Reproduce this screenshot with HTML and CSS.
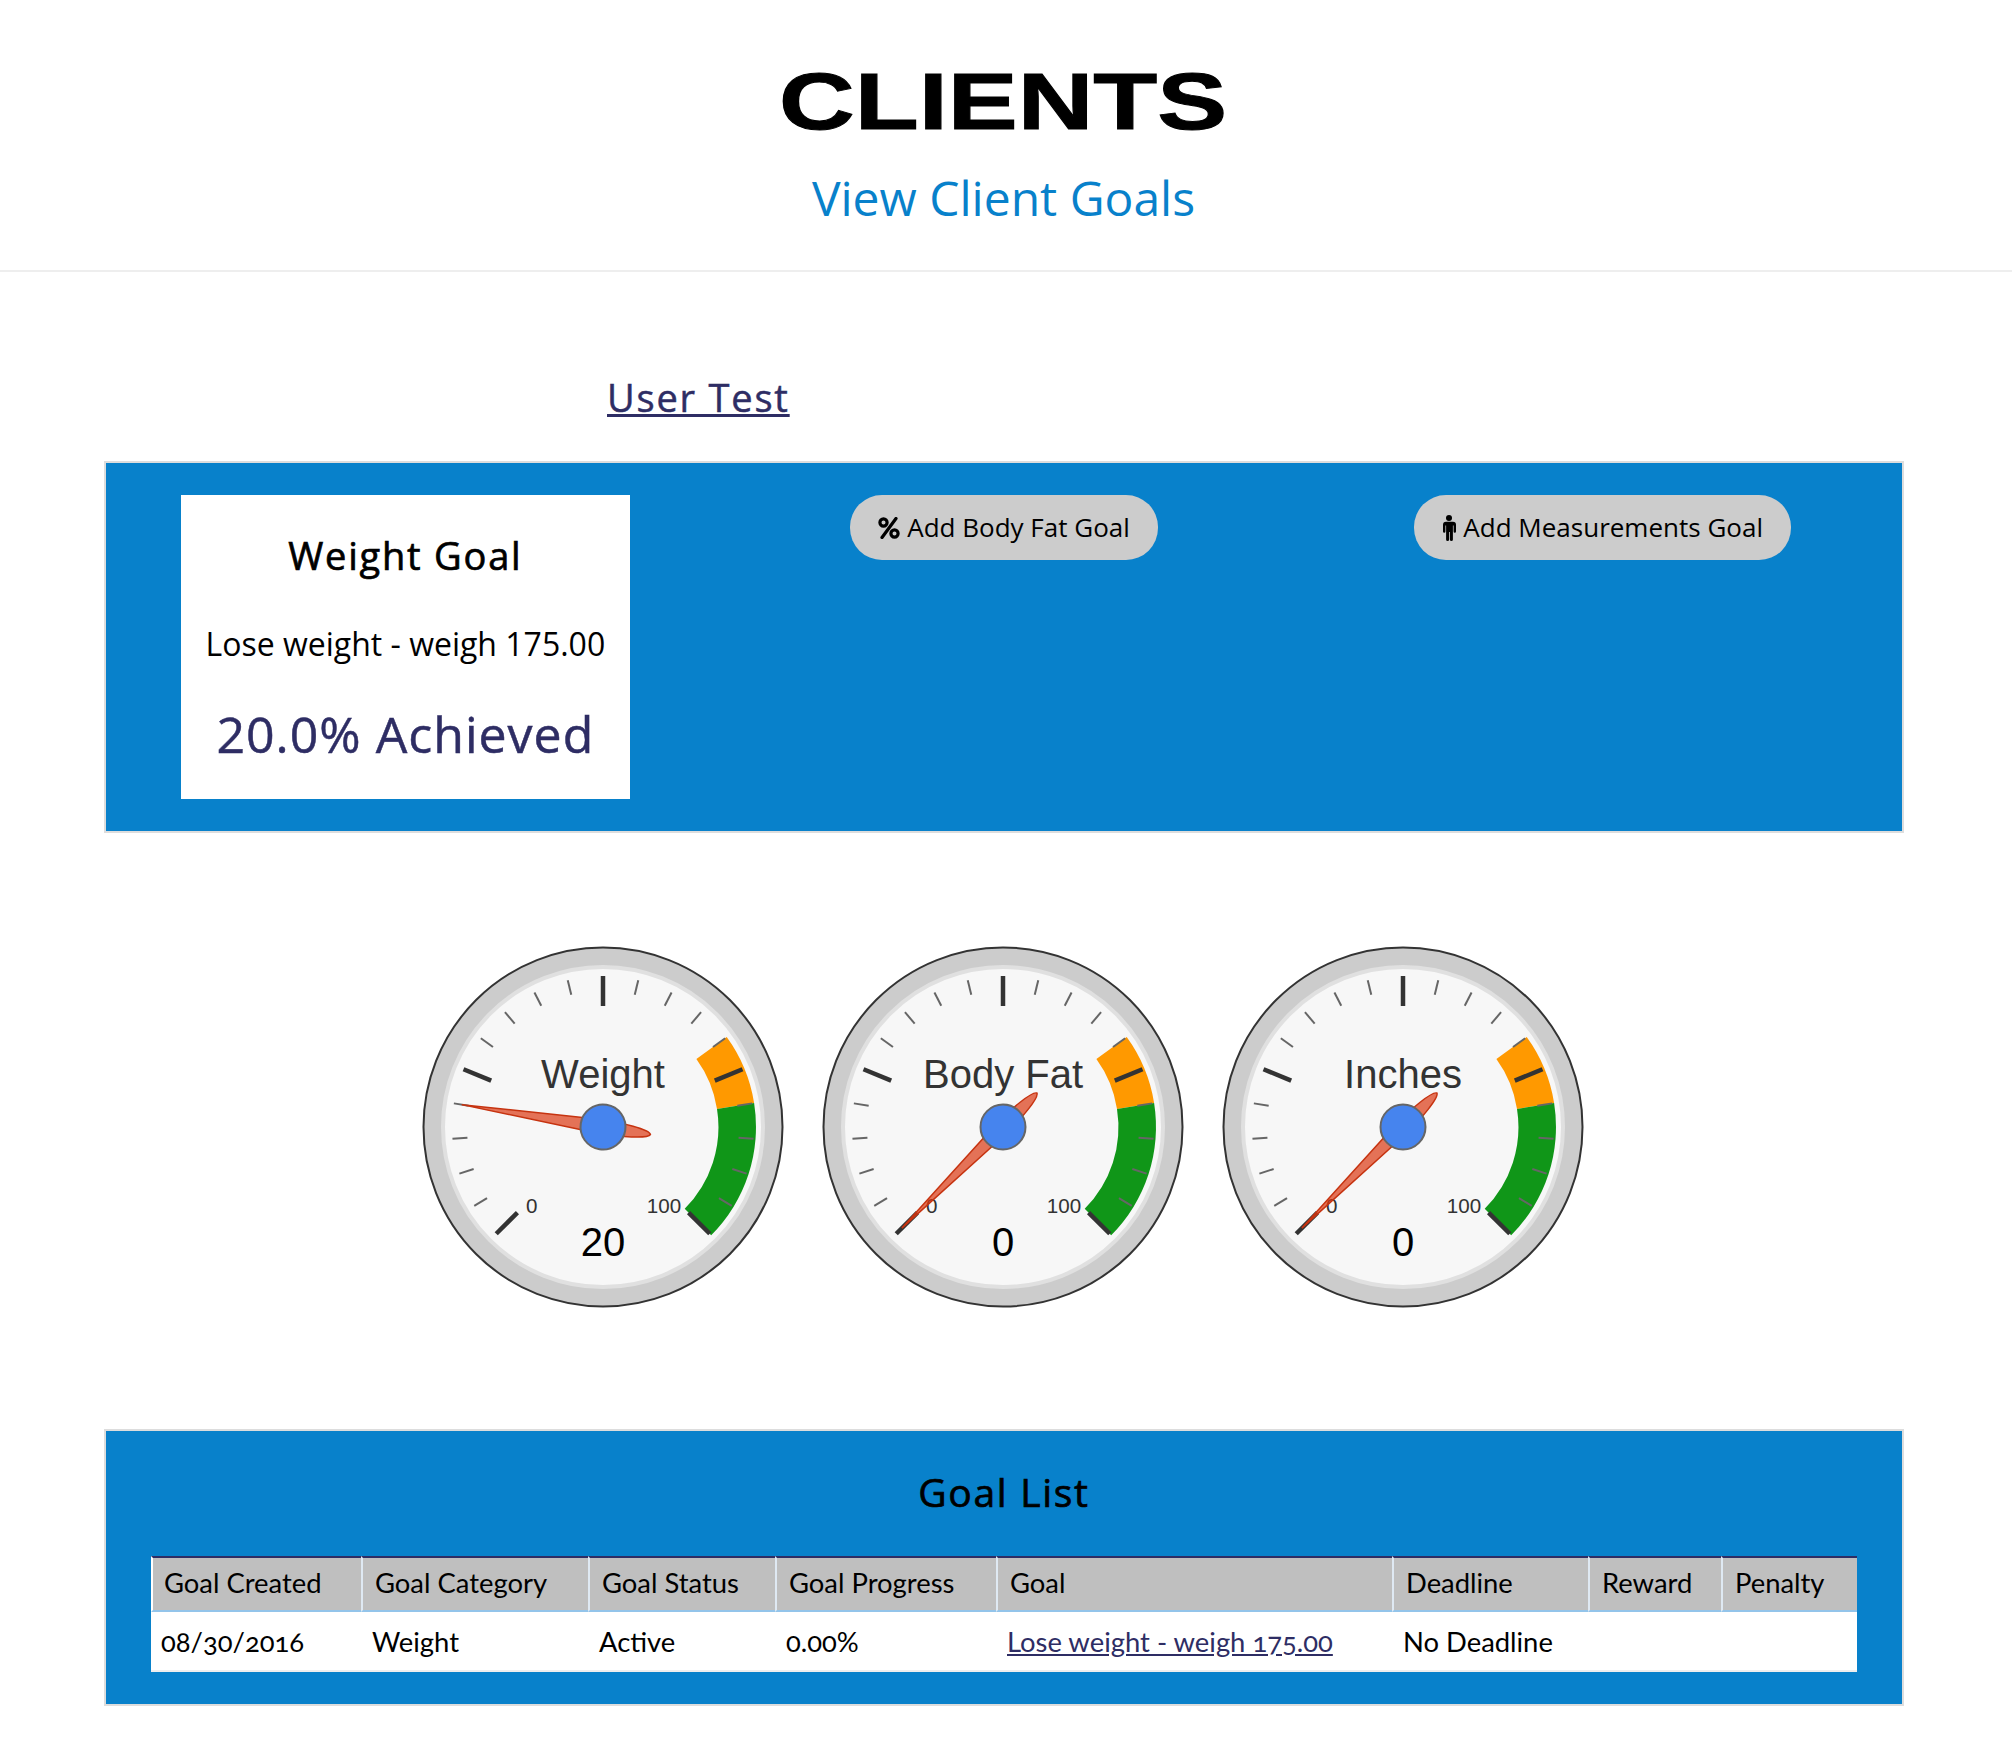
FILE: index.html
```html
<!DOCTYPE html>
<html lang="en">
<head>
<meta charset="utf-8">
<title>Clients</title>
<link rel="stylesheet" href="styles.css">
</head>
<body>
<header class="page-head">
  <h1 class="page-title"><span>CLIENTS</span></h1>
  <a class="page-sub" href="#">View Client Goals</a>
</header>
<main class="content">
  <div class="user-row"><a class="user-link" href="#">User Test</a></div>
  <section class="panel goal-panel">
    <div class="goal-col">
      <div class="goal-card">
        <h3 class="goal-title">Weight Goal</h3>
        <p class="goal-desc">Lose weight - weigh 175.00</p>
        <p class="goal-progress">20.0% Achieved</p>
      </div>
    </div>
    <div class="goal-col">
      <a class="pill" href="#">
        <svg class="pill-icon pct" viewBox="0 0 22 22" aria-hidden="true">
          <circle cx="5.500" cy="5.500" r="3.600"/>
          <circle cx="16.500" cy="16.500" r="3.600"/>
          <line x1="18" y1="1.500" x2="4" y2="20.500"/>
        </svg>Add Body Fat Goal</a>
    </div>
    <div class="goal-col">
      <a class="pill" href="#">
        <svg class="pill-icon person" viewBox="0 0 14 26" aria-hidden="true">
          <circle cx="7" cy="3" r="3"/>
          <path d="M3 6.800h8a3 3 0 0 1 3 3v6.700a1.200 1.200 0 0 1-2.400 0V10.500h-.7V24.400a1.500 1.500 0 0 1-3 0V17h-.8V24.400a1.500 1.500 0 0 1-3 0V10.500h-.7V16.500a1.200 1.200 0 0 1-2.400 0V9.800a3 3 0 0 1 3-3z"/>
        </svg>Add Measurements Goal</a>
    </div>
  </section>
  <section class="gauges">
    <svg class="gauge" viewBox="0 0 400 400" role="img" aria-label="Weight 20">
      <defs>
        <g id="dial">
          <circle cx="200" cy="200" r="179.500" class="g-outer"/>
          <circle cx="200" cy="200" r="160" class="g-inner"/>
          <path class="g-orange" d="M323.700 110.100A153 153 0 0 1 351.100 176.100L314 181.900A115.500 115.500 0 0 0 293.400 132.100Z"/>
          <path class="g-green" d="M351.100 176.100A153 153 0 0 1 308.200 308.200L281.700 281.700A115.500 115.500 0 0 0 314 181.900Z"/>
          <g class="g-minor">
            <line x1="200" y1="64" x2="200" y2="49" transform="rotate(-121.500 200 200)"/>
            <line x1="200" y1="64" x2="200" y2="49" transform="rotate(-108 200 200)"/>
            <line x1="200" y1="64" x2="200" y2="49" transform="rotate(-94.500 200 200)"/>
            <line x1="200" y1="64" x2="200" y2="49" transform="rotate(-81 200 200)"/>
            <line x1="200" y1="64" x2="200" y2="49" transform="rotate(-54 200 200)"/>
            <line x1="200" y1="64" x2="200" y2="49" transform="rotate(-40.500 200 200)"/>
            <line x1="200" y1="64" x2="200" y2="49" transform="rotate(-27 200 200)"/>
            <line x1="200" y1="64" x2="200" y2="49" transform="rotate(-13.500 200 200)"/>
            <line x1="200" y1="64" x2="200" y2="49" transform="rotate(13.500 200 200)"/>
            <line x1="200" y1="64" x2="200" y2="49" transform="rotate(27 200 200)"/>
            <line x1="200" y1="64" x2="200" y2="49" transform="rotate(40.500 200 200)"/>
            <line x1="200" y1="64" x2="200" y2="49" transform="rotate(54 200 200)"/>
            <line x1="200" y1="64" x2="200" y2="49" transform="rotate(81 200 200)"/>
            <line x1="200" y1="64" x2="200" y2="49" transform="rotate(94.500 200 200)"/>
            <line x1="200" y1="64" x2="200" y2="49" transform="rotate(108 200 200)"/>
            <line x1="200" y1="64" x2="200" y2="49" transform="rotate(121.500 200 200)"/>
          </g>
          <g class="g-major">
            <line x1="200" y1="79" x2="200" y2="49" transform="rotate(-135 200 200)"/>
            <line x1="200" y1="79" x2="200" y2="49" transform="rotate(-67.500 200 200)"/>
            <line x1="200" y1="79" x2="200" y2="49"/>
            <line x1="200" y1="79" x2="200" y2="49" transform="rotate(67.500 200 200)"/>
            <line x1="200" y1="79" x2="200" y2="49" transform="rotate(135 200 200)"/>
          </g>
          <text x="128.700" y="286" class="g-tick-label">0</text>
          <text x="261" y="286" class="g-tick-label">100</text>
        </g>
        <g id="needle">
          <path class="g-needle" d="M0-143L-7-3C-7 18-5 46 0 48C5 46 7 18 7-3Z"/>
          <circle r="22.500" class="g-hub"/>
        </g>
      </defs>
      <use href="#dial"/>
      <text x="200" y="160.500" class="g-title">Weight</text>
      <text x="200" y="329" class="g-value">20</text>
      <use href="#needle" transform="translate(200 200) rotate(-81)"/>
    </svg>
    <svg class="gauge" viewBox="0 0 400 400" role="img" aria-label="Body Fat 0">
      <use href="#dial"/>
      <text x="200" y="160.500" class="g-title">Body Fat</text>
      <text x="200" y="329" class="g-value">0</text>
      <use href="#needle" transform="translate(200 200) rotate(-135)"/>
    </svg>
    <svg class="gauge" viewBox="0 0 400 400" role="img" aria-label="Inches 0">
      <use href="#dial"/>
      <text x="200" y="160.500" class="g-title">Inches</text>
      <text x="200" y="329" class="g-value">0</text>
      <use href="#needle" transform="translate(200 200) rotate(-135)"/>
    </svg>
  </section>
  <section class="panel list-panel">
    <h3 class="list-title">Goal List</h3>
    <table class="goal-table">
      <thead>
        <tr>
          <th class="c1">Goal Created</th>
          <th class="c2">Goal Category</th>
          <th class="c3">Goal Status</th>
          <th class="c4">Goal Progress</th>
          <th class="c5">Goal</th>
          <th class="c6">Deadline</th>
          <th class="c7">Reward</th>
          <th class="c8">Penalty</th>
        </tr>
      </thead>
      <tbody>
        <tr>
          <td>08/30/2016</td>
          <td>Weight</td>
          <td>Active</td>
          <td>0.00%</td>
          <td><a class="goal-link" href="#">Lose weight - weigh 175.00</a></td>
          <td>No Deadline</td>
          <td></td>
          <td></td>
        </tr>
      </tbody>
    </table>
  </section>
</main>
</body>
</html>
```
FILE: styles.css
```css
* { box-sizing: border-box; }
html, body { margin: 0; padding: 0; background: #fff; }
body { font-family: "Open Sans", "Liberation Sans", sans-serif; color: #000; }

.page-head {
  height: 272px;
  border-bottom: 2px solid #eee;
  text-align: center;
  padding: 57px 5px 0 0;
}
.page-title {
  margin: 0;
  height: 90px;
  font-family: "Liberation Sans", Arial, sans-serif;
  font-size: 80px;
  line-height: 90px;
  font-weight: 700;
  -webkit-text-stroke: 1px #000;
}
.page-title span { display: inline-block; transform: scaleX(1.31); }
.page-sub {
  display: block;
  margin-top: 18px;
  font-size: 48px;
  line-height: 66px;
  color: #0881cb;
  text-decoration: none;
}

.content { padding: 0 108px 0 104px; }

.user-row { height: 189px; padding: 97px 0 0 503px; }
.user-link {
  font-size: 38px;
  line-height: 56px;
  color: #2e2d64;
  letter-spacing: 1.800px;
  -webkit-text-stroke: 0.5px #2e2d64;
}

.panel { background: #0881cb; border: 2px solid #ddd; }

.goal-panel {
  display: grid;
  grid-template-columns: repeat(3, 1fr);
  height: 372px;
  padding-top: 32px;
}
.goal-col { display: flex; justify-content: center; align-items: flex-start; }
.goal-card {
  width: 449px;
  height: 304px;
  background: #fff;
  text-align: center;
  padding-top: 34px;
}
.goal-title {
  margin: 0;
  font-size: 38px;
  line-height: 52px;
  font-weight: 400;
  letter-spacing: 1.800px;
  -webkit-text-stroke: 0.7px #000;
}
.goal-desc { margin: 41px 0 0; font-size: 32px; line-height: 44px; }
.goal-progress {
  margin: 35px 0 0;
  font-size: 50px;
  line-height: 66px;
  color: #2e2d64;
  letter-spacing: 1px;
  -webkit-text-stroke: 0.5px #2e2d64;
}

.pill {
  display: inline-flex;
  align-items: center;
  height: 65px;
  padding: 0 28px 2px;
  border-radius: 32px;
  background: #ccc;
  color: #000;
  font-size: 26px;
  text-decoration: none;
  white-space: nowrap;
}
.pill-icon { flex: none; margin: 2px 7px 0 0; }
.pct { width: 22px; height: 22px; fill: none; stroke: #000; stroke-width: 3.200; stroke-linecap: round; }
.person { width: 14px; height: 26px; fill: #000; }

.gauges {
  display: flex;
  justify-content: center;
  margin-top: 94px;
  padding-right: 2px;
}
.gauge { width: 400px; height: 400px; display: block; }
.g-outer { fill: #ccc; stroke: #333; stroke-width: 2; }
.g-inner { fill: #f7f7f7; stroke: #e0e0e0; stroke-width: 4; }
.g-orange { fill: #f90; }
.g-green { fill: #109618; }
.g-minor line { stroke: #666; stroke-width: 2; }
.g-major line { stroke: #333; stroke-width: 4.500; }
.g-needle { fill: #dc3912; fill-opacity: 0.7; stroke: #c63310; stroke-width: 1.500; }
.g-hub { fill: #4684ee; stroke: #666; stroke-width: 2; }
.gauge text { font-family: "Liberation Sans", Arial, sans-serif; text-anchor: middle; }
.g-title { font-size: 40px; fill: #333; }
.g-value { font-size: 40px; fill: #000; }
.g-tick-label { font-size: 20.600px; fill: #333; }

.list-panel {
  margin-top: 102px;
  height: 277px;
  padding: 0 45px;
  text-align: center;
}
.list-title {
  margin: 0;
  padding-top: 35px;
  height: 125px;
  font-size: 39px;
  line-height: 52px;
  font-weight: 400;
  letter-spacing: 1.700px;
  -webkit-text-stroke: 0.7px #000;
}
.goal-table {
  width: 1706px;
  table-layout: fixed;
  border-collapse: separate;
  border-spacing: 0;
  background: #fff;
  text-align: left;
  font-family: Lato, "Open Sans", sans-serif;
  font-size: 27.400px;
  font-variant-numeric: oldstyle-nums;
  border-bottom: 2px solid #eee;
}
.goal-table th {
  height: 56px;
  padding: 0 0 4px 12px;
  background: #bfbfbf;
  font-weight: 400;
  border-top: 2px solid #2e2d64;
  border-bottom: 2px solid #93c4ea;
  border-left: 2px solid #dfe9f3;
}
.goal-table th:first-child { border-left-color: #fff; padding-left: 11px; }
.goal-table td { height: 58px; padding: 0 0 0 11px; }
.goal-table td:first-child { padding-left: 10px; }
.goal-link { color: #2e2d64; }
.c1 { width: 210px; }
.c2 { width: 227px; }
.c3 { width: 187px; }
.c4 { width: 221px; }
.c5 { width: 396px; }
.c6 { width: 196px; }
.c7 { width: 133px; }
.c8 { width: 136px; }
```
